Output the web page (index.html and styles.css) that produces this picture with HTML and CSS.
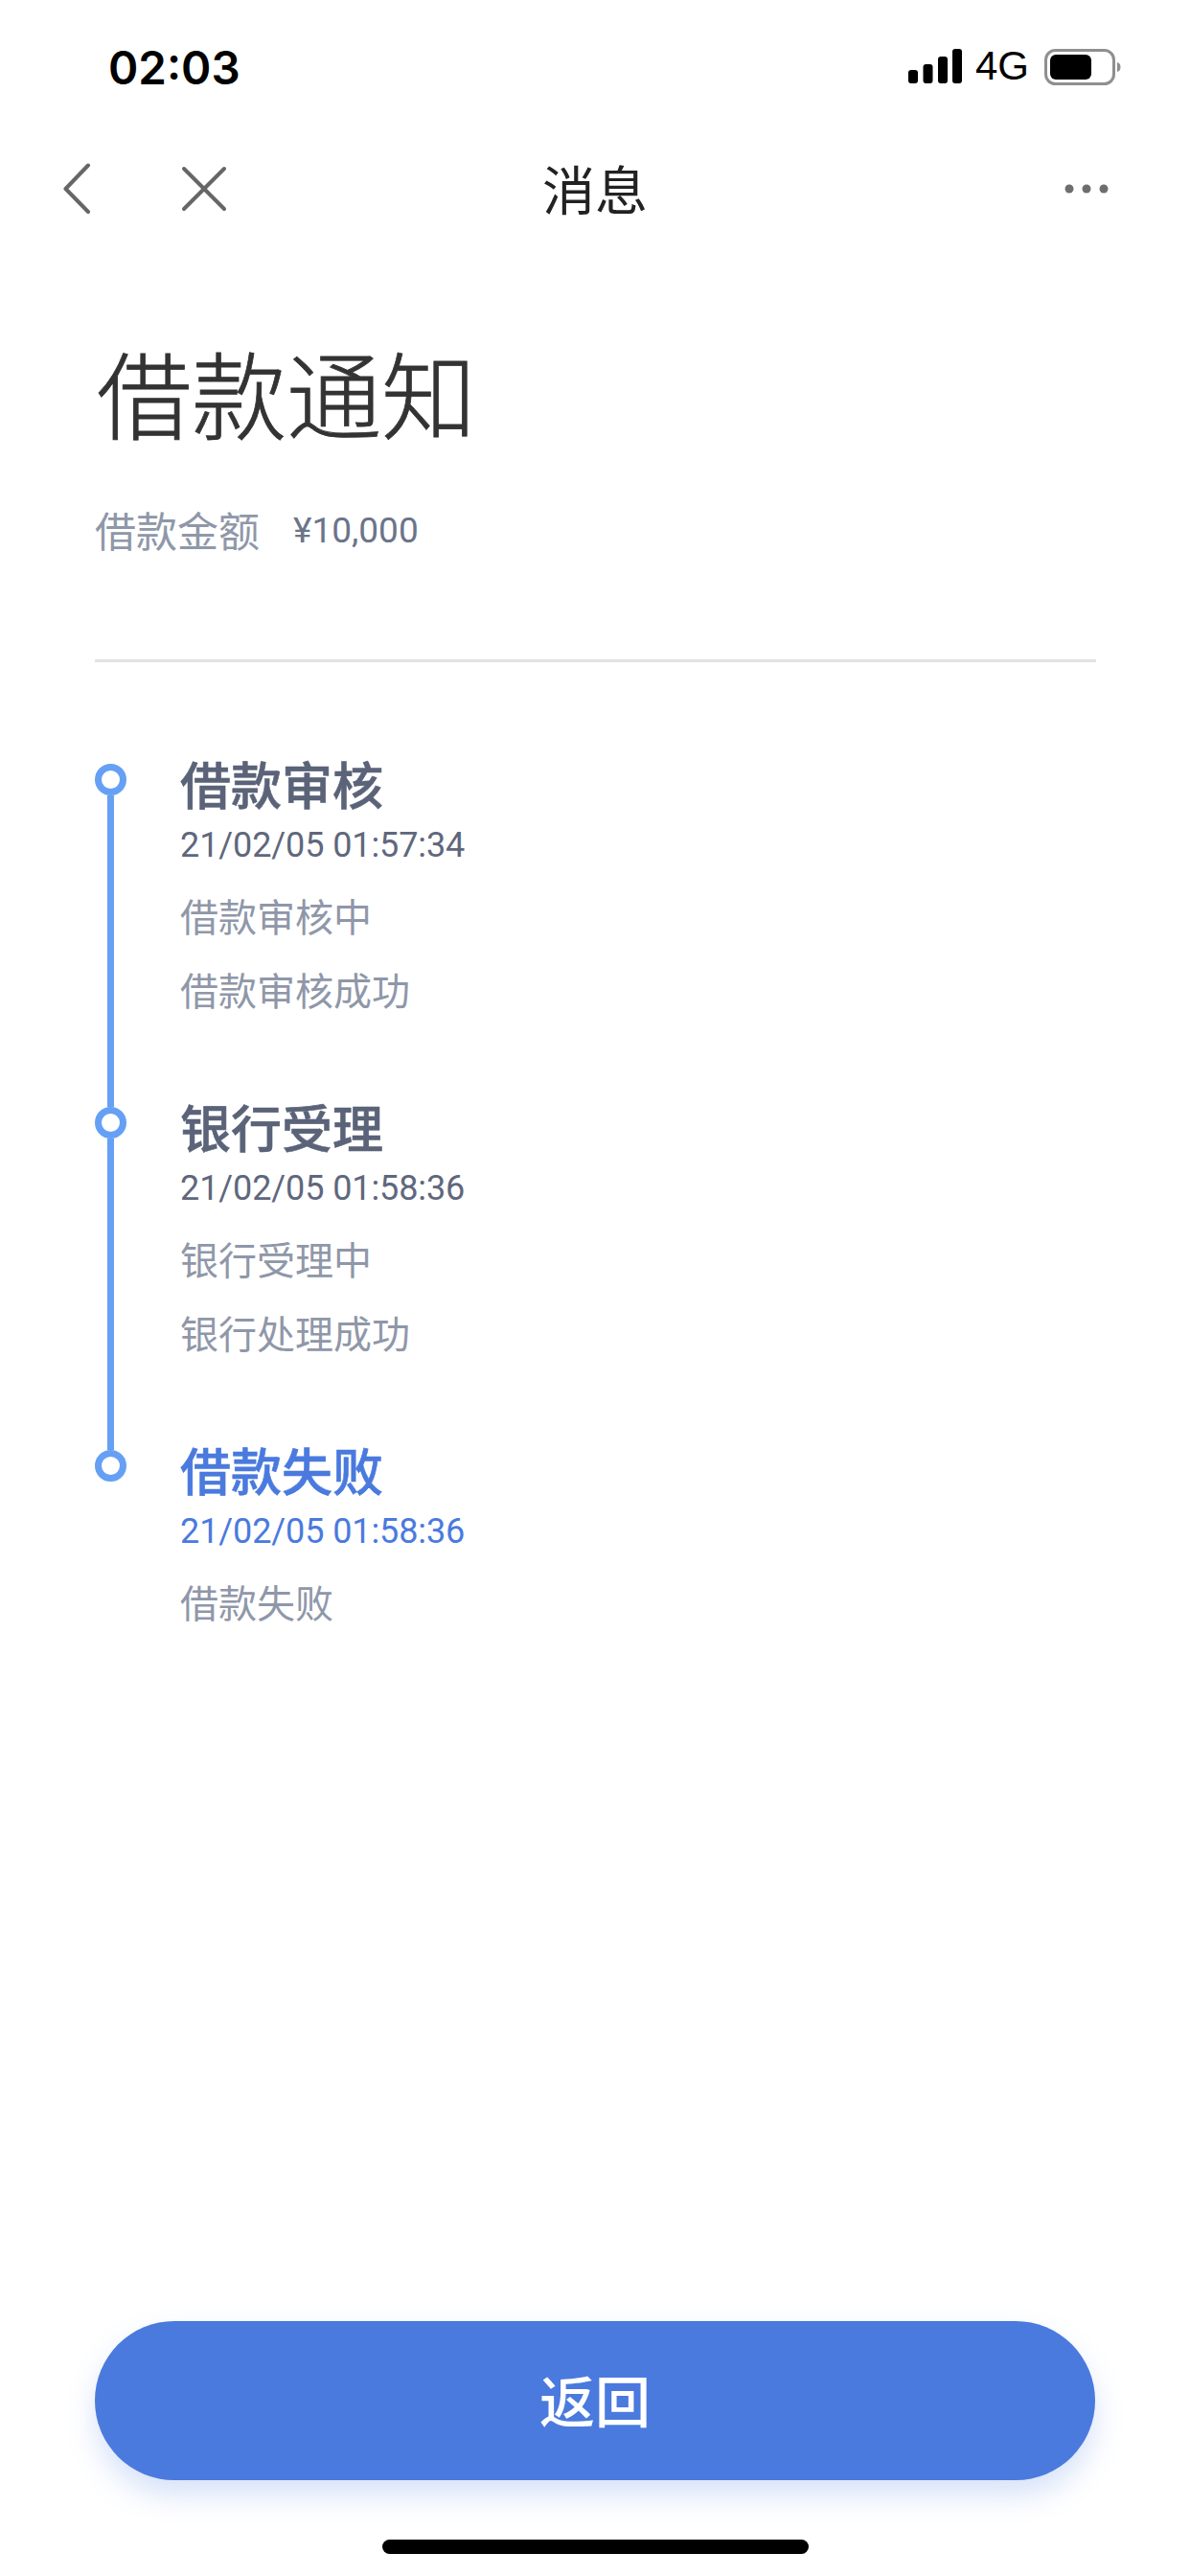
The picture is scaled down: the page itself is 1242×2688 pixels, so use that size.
FILE: index.html
```html
<!DOCTYPE html>
<html lang="zh-CN">
<head>
<meta charset="utf-8">
<title>消息</title>
<link rel="stylesheet" href="styles.css">
</head>
<body>
<main class="page">
  <header class="status">
    <span class="time">02:03</span>
    <div class="status-right">
      <svg class="signal" width="56" height="36" viewBox="0 0 56 36"><rect x="0" y="22" width="10" height="14" rx="3"/><rect x="15.500" y="16" width="10" height="20" rx="3"/><rect x="31" y="8" width="10" height="28" rx="3"/><rect x="46" y="0" width="10" height="36" rx="3"/></svg>
      <span class="net">4G</span>
      <svg class="battery" width="80" height="38" viewBox="0 0 80 38"><rect x="1.500" y="1.500" width="71" height="35" rx="10" fill="none" stroke="#8f8f8f" stroke-width="3"/><rect x="6" y="6" width="43" height="26" rx="6" fill="#000"/><path d="M76 14c2.500 .6 3.500 2.500 3.500 5s-1 4.400-3.500 5z" fill="#8f8f8f"/></svg>
    </div>
  </header>

  <nav class="nav">
    <div class="nav-left">
      <svg class="ico" width="30" height="54" viewBox="0 0 30 54"><path d="M26 2.500 2.500 27 26 51"/></svg>
      <svg class="ico" width="48" height="48" viewBox="0 0 48 48"><path d="M3 3 45 45M45 3 3 45"/></svg>
    </div>
    <h2 class="nav-title">消息</h2>
    <div class="nav-right">
      <svg class="dots" width="46" height="10" viewBox="0 0 46 10"><circle cx="5" cy="5" r="4.500"/><circle cx="23" cy="5" r="4.500"/><circle cx="41" cy="5" r="4.500"/></svg>
    </div>
  </nav>

  <section class="head">
    <h1 class="title">借款通知</h1>
    <p class="amount"><span class="amount-label">借款金额</span><span class="amount-value">¥10,000</span></p>
  </section>

  <ol class="timeline">
    <li class="step">
      <div class="rail"><span class="dot"></span><span class="line"></span></div>
      <div class="body">
        <h3 class="step-title">借款审核</h3>
        <time class="step-time">21/02/05 01:57:34</time>
        <p class="step-desc">借款审核中</p>
        <p class="step-desc">借款审核成功</p>
      </div>
    </li>
    <li class="step">
      <div class="rail"><span class="dot"></span><span class="line"></span></div>
      <div class="body">
        <h3 class="step-title">银行受理</h3>
        <time class="step-time">21/02/05 01:58:36</time>
        <p class="step-desc">银行受理中</p>
        <p class="step-desc">银行处理成功</p>
      </div>
    </li>
    <li class="step step-current">
      <div class="rail"><span class="dot"></span></div>
      <div class="body">
        <h3 class="step-title">借款失败</h3>
        <time class="step-time">21/02/05 01:58:36</time>
        <p class="step-desc">借款失败</p>
      </div>
    </li>
  </ol>

  <footer class="foot">
    <button class="back-btn" type="button">返回</button>
    <span class="home-bar"></span>
  </footer>
</main>
</body>
</html>
```

FILE: styles.css
```css
* { box-sizing: border-box; }
html, body { margin: 0; padding: 0; background: #fff; }
body { font-family: "Noto Sans CJK SC", Roboto, sans-serif; }
h1, h2, h3, p, ol { margin: 0; padding: 0; }
ol { list-style: none; }

.page { width: 1242px; height: 2688px; display: flex; flex-direction: column; overflow: hidden; background: #fff; }

.status { height: 131px; padding: 52px 72px 0 113px; display: flex; justify-content: space-between; align-items: flex-start; }
.time { font-family: Inter, "Liberation Sans", sans-serif; font-weight: 600; font-size: 47.5px; line-height: 38px; color: #000; }
.status-right { display: flex; align-items: flex-start; margin-top: -1px; }
.signal { fill: #000; display: block; margin-right: 14px; }
.net { font-family: "Liberation Sans", sans-serif; font-size: 42px; line-height: 36px; color: #000; margin-right: 16px; }
.battery { display: block; }

.nav { height: 132px; display: grid; grid-template-columns: 1fr auto 1fr; align-items: center; }
.nav-left { display: flex; align-items: center; gap: 93px; padding-left: 66px; }
.ico { display: block; fill: none; stroke: #666; stroke-width: 4; stroke-linecap: round; stroke-linejoin: round; }
.nav-title { font-size: 55px; font-weight: 400; line-height: 72px; color: #222; margin-top: -5px; }
.nav-right { display: flex; justify-content: flex-end; padding-right: 85px; }
.dots { display: block; fill: #6e6e6e; }

.head { margin: 0 98px 0 99px; height: 428px; padding-top: 85px; border-bottom: 3px solid #e2e2e2; }
.title { font-size: 99px; font-weight: 300; -webkit-text-stroke: .8px #333; line-height: 120px; color: #333; margin-left: 2px; }
.amount { margin-top: 54px; display: flex; align-items: center; gap: 35px; height: 60px; }
.amount-label { font-size: 43px; font-weight: 400; color: #8f97a9; }
.amount-value { font-family: Roboto, sans-serif; font-size: 37px; font-weight: 400; color: #6b7489; margin-top: 3px; }

.timeline { padding: 106px 0 0 99px; }
.step { display: flex; height: 358px; }
.step-current { height: auto; }
.rail { width: 33px; display: flex; flex-direction: column; align-items: center; margin-right: 56px; }
.dot { width: 33px; height: 33px; flex: none; border: 7px solid #65a0f5; border-radius: 50%; background: #fff; }
.line { width: 7px; flex: 1; background: #65a0f5; }
.body { display: flex; flex-direction: column; align-items: flex-start; margin-top: -15px; }
.step-title { font-size: 53px; font-weight: 500; -webkit-text-stroke: .6px currentColor; line-height: 70px; color: #5a6378; margin-bottom: 7px; }
.step-time { font-family: Roboto, sans-serif; font-size: 36px; font-weight: 400; line-height: 46px; color: #5f677d; margin-bottom: 12px; letter-spacing: -.1px; }
.step-desc { font-size: 40px; font-weight: 400; line-height: 76.5px; color: #8f97a9; }
.step-current .step-title, .step-current .step-time { color: #4a7ade; }

.foot { margin-top: auto; display: flex; flex-direction: column; align-items: center; padding-bottom: 23px; }
.back-btn { width: 1044px; height: 166px; border: 0; border-radius: 83px; background: #4a7ade; color: #fff; font-family: inherit; font-size: 58px; font-weight: 500; line-height: 162px; box-shadow: 0 16px 30px rgba(74, 122, 222, .22); padding: 0 0 4px; }
.home-bar { width: 445px; height: 15px; margin-top: 62px; border-radius: 8px; background: #000; }
```
